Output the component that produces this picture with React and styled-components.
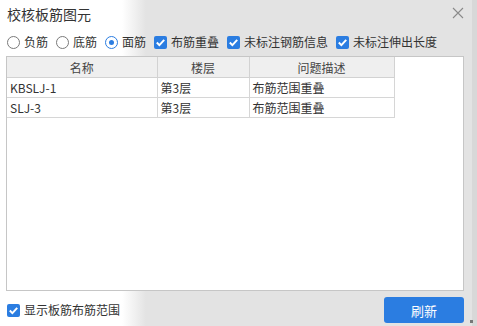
import styled, { createGlobalStyle } from "styled-components";

const rows = [
  { name: "KBSLJ-1", floor: "第3层", desc: "布筋范围重叠" },
  { name: "SLJ-3", floor: "第3层", desc: "布筋范围重叠" },
];

const options = [
  { type: "radio", label: "负筋", checked: false },
  { type: "radio", label: "底筋", checked: false },
  { type: "radio", label: "面筋", checked: true },
  { type: "check", label: "布筋重叠", checked: true },
  { type: "check", label: "未标注钢筋信息", checked: true },
  { type: "check", label: "未标注伸出长度", checked: true },
];

function CheckMark() {
  return (
    <svg width="13" height="13" viewBox="0 0 13 13">
      <path d="M2.8 6.5 L5.4 9.1 L10.2 3.9" fill="none" stroke="#fff" strokeWidth="2" />
    </svg>
  );
}

export default function App() {
  return (
    <>
      <GlobalStyle />
      <Window>
        <TitleBar>
          <Title>校核板筋图元</Title>
          <Close>
            <svg width="12" height="12" viewBox="0 0 12 12">
              <path d="M1 1 L11 11 M11 1 L1 11" stroke="#8a8a8a" strokeWidth="1.1" />
            </svg>
          </Close>
        </TitleBar>

        <Options>
          {options.map((o) => (
            <Option key={o.label}>
              {o.type === "radio" ? (
                <Radio $checked={o.checked} />
              ) : (
                <Check>
                  <CheckMark />
                </Check>
              )}
              <span>{o.label}</span>
            </Option>
          ))}
        </Options>

        <TableBox>
          <Table>
            <colgroup>
              <col style={{ width: 150 }} />
              <col style={{ width: 92 }} />
              <col style={{ width: 145 }} />
            </colgroup>
            <thead>
              <tr>
                <Th>名称</Th>
                <Th>楼层</Th>
                <Th>问题描述</Th>
              </tr>
            </thead>
            <tbody>
              {rows.map((r) => (
                <tr key={r.name}>
                  <Td>{r.name}</Td>
                  <Td>{r.floor}</Td>
                  <Td>{r.desc}</Td>
                </tr>
              ))}
            </tbody>
          </Table>
        </TableBox>

        <Footer>
          <Option>
            <Check>
              <CheckMark />
            </Check>
            <span>显示板筋布筋范围</span>
          </Option>
          <RefreshButton>刷新</RefreshButton>
        </Footer>
        <Grip />
      </Window>
    </>
  );
}

//----- Styled Components

const GlobalStyle = createGlobalStyle`
  body {
    margin: 0;
    font-family: "Noto Sans CJK SC", "Noto Sans", sans-serif;
    overflow: hidden;
  }
`;

const Window = styled.div`
  position: relative;
  width: 477px;
  height: 326px;
  box-sizing: border-box;
  display: flex;
  flex-direction: column;
  background: linear-gradient(
    to right,
    #ffffff 122px,
    #e3e3e3 146px,
    #e3e3e3 472px,
    #d8d8d8 472px
  );
  color: #333333;
`;

const TitleBar = styled.div`
  height: 28px;
  display: flex;
  align-items: center;
  justify-content: space-between;
  padding: 0 13px 0 7px;
`;

const Title = styled.div`
  font-size: 14px;
  color: #333333;
  line-height: 20px;
  margin-top: -1px;
`;

const Close = styled.div`
  display: flex;
  margin-top: -3px;
`;

const Options = styled.div`
  display: flex;
  align-items: center;
  gap: 8px;
  height: 16px;
  margin: 6px 0 0 7px;
`;

const Option = styled.label`
  display: flex;
  align-items: center;
  gap: 4px;
  font-size: 12px;
  color: #333333;
  line-height: 16px;
  white-space: nowrap;
`;

const Radio = styled.span`
  width: 13px;
  height: 13px;
  box-sizing: border-box;
  border-radius: 50%;
  border: 1px solid ${(p) => (p.$checked ? "#2b7de1" : "#7a7a7a")};
  background: #fff;
  display: flex;
  align-items: center;
  justify-content: center;
  &::after {
    content: "";
    display: ${(p) => (p.$checked ? "block" : "none")};
    width: 5px;
    height: 5px;
    border-radius: 50%;
    background: #2b7de1;
  }
`;

const Check = styled.span`
  width: 13px;
  height: 13px;
  border-radius: 2px;
  background: #2b7de1;
  display: flex;
`;

const TableBox = styled.div`
  margin: 6px 0 0 6px;
  width: 458px;
  height: 235px;
  box-sizing: border-box;
  border: 1px solid #c6c6c6;
  background: #ffffff;
`;

const Table = styled.table`
  border-collapse: collapse;
  table-layout: fixed;
  width: 387px;
  font-size: 12px;
`;

const Th = styled.th`
  height: 20px;
  padding: 0;
  font-weight: normal;
  color: #444444;
  background: #efefef;
  border-right: 1px solid #d2d2d2;
  border-bottom: 1px solid #d2d2d2;
  text-align: center;
`;

const Td = styled.td`
  height: 19px;
  padding: 0 0 0 3px;
  color: #333333;
  border-right: 1px solid #d6d6d6;
  border-bottom: 1px solid #d6d6d6;
  white-space: nowrap;
`;

const Footer = styled.div`
  display: flex;
  align-items: center;
  justify-content: space-between;
  margin: 6px 0 0 7px;
  width: 457px;
`;

const RefreshButton = styled.button`
  width: 80px;
  height: 26px;
  border: none;
  border-radius: 3px;
  background: #2b7de1;
  color: #ffffff;
  font-family: "Noto Sans CJK SC", sans-serif;
  font-size: 13px;
  cursor: pointer;
`;

const Grip = styled.div`
  position: absolute;
  right: 4px;
  bottom: 3px;
  width: 3px;
  height: 3px;
  background: #777777;
`;
